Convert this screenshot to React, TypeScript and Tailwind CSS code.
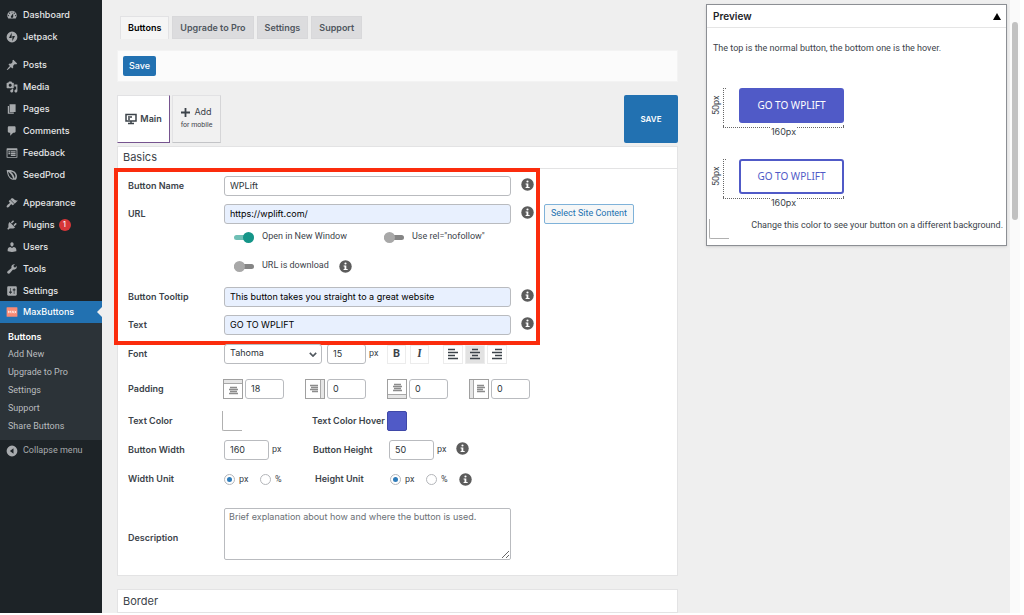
import { useState } from "react";
import type { ReactNode } from "react";
import clsx from "clsx";

/* Admin menu glyphs, drawn on a 20x20 grid */
const glyphs = {
  dashboard:
    "M3.76 16h12.48A7.998 7.998 0 0 0 10 3a7.998 7.998 0 0 0-6.24 13zM10 4c.55 0 1 .45 1 1s-.45 1-1 1-1-.45-1-1 .45-1 1-1zM6 6c.55 0 1 .45 1 1s-.45 1-1 1-1-.45-1-1 .45-1 1-1zm8 0c.55 0 1 .45 1 1s-.45 1-1 1-1-.45-1-1 .45-1 1-1zm-5.37 5.55L12 7v6c0 1.1-.9 2-2 2s-2-.9-2-2c0-.57.24-1.08.63-1.45zM4 10c.55 0 1 .45 1 1s-.45 1-1 1-1-.45-1-1 .45-1 1-1zm12 0c.55 0 1 .45 1 1s-.45 1-1 1-1-.45-1-1 .45-1 1-1z",
  jetpack:
    "M10 1a9 9 0 1 0 0 18 9 9 0 0 0 0-18zM9.4 11.6H5l4.4-8.5zM10.6 16.9V8.4H15z",
  posts:
    "M10.44 3.02l1.82-1.82 6.36 6.35-1.83 1.82c-1.05-.68-2.48-.57-3.41.36l-.75.75c-.92.93-1.04 2.35-.35 3.41l-1.83 1.82-2.41-2.41-2.8 2.79c-.42.42-3.38 2.71-3.8 2.29s1.86-3.39 2.28-3.81l2.79-2.79L4.1 9.36l1.83-1.82c1.05.69 2.48.57 3.4-.36l.75-.75c.93-.92 1.05-2.35.36-3.41z",
  media:
    "M13 11V4c0-.55-.45-1-1-1h-1.67L9 1H5L3.67 3H2c-.55 0-1 .45-1 1v7c0 .55.45 1 1 1h10c.55 0 1-.45 1-1zM7 4.5c1.38 0 2.5 1.12 2.5 2.5S8.38 9.5 7 9.5 4.5 8.38 4.5 7 5.62 4.5 7 4.5zM14 6h5v10.5c0 1.38-1.12 2.5-2.5 2.5S14 17.88 14 16.5s1.12-2.5 2.5-2.5c.17 0 .34.02.5.05V9h-3V6zm-4 8.05V13h2v3.5c0 1.38-1.12 2.5-2.5 2.5S7 17.88 7 16.5 8.12 14 9.5 14c.17 0 .34.02.5.05z",
  pages: "M6 15V2h10v13H6zm-1 1h8v2H3V5h2v11z",
  comments:
    "M5 2h9c1.1 0 2 .9 2 2v7c0 1.1-.9 2-2 2h-2l-5 5v-5H5c-1.1 0-2-.9-2-2V4c0-1.1.9-2 2-2z",
  feedback:
    "M2 2h16c.55 0 1 .45 1 1v14c0 .55-.45 1-1 1H2c-.55 0-1-.45-1-1V3c0-.55.45-1 1-1zm15.5 14.5v-11h-15v11zM4 7v2h3V7zm4 0v2h8V7zM4 10v2h3v-2zm4 0v2h8v-2zm0 3v2h8v-2z",
  seedprod:
    "M1 2c8-1 15 1 17 8 .8 3 0 6-1.500 8-5 .5-9.500-.5-12-5C2.500 10 2 6 1 2zm2.500 2c.5 3.500 1.200 6.500 3 9 1.500 2 3.500 3 5.500 3.300C11 12 8 7.500 3.500 4zm4 .3c4 3 6.500 7 7 11.700 1-1.500 1.500-3.500 1-5.500C14.500 6.500 11 5 7.500 4.300z",
  appearance:
    "M14.48 11.06L7.41 3.99l1.5-1.5c.5-.56 2.3-.47 3.51.32 1.21.8 1.43 1.28 2.91 2.1 1.18.64 2.45 1.26 4.45.85zm-.71.71L6.7 4.7 4.93 6.47c-.39.39-.39 1.02 0 1.41l1.06 1.06c.39.39.39 1.03 0 1.42-.6.6-1.43 1.11-2.21 1.69-.35.26-.7.53-1.01.84C1.43 14.23.4 16.08 1.4 17.07c.99 1 2.84-.03 4.18-1.36.31-.31.58-.66.85-1.02.57-.78 1.08-1.61 1.69-2.21.39-.39 1.02-.39 1.41 0l1.06 1.06c.39.39 1.02.39 1.41 0z",
  plugins:
    "M13.11 4.36L9.87 7.6 8 5.73l3.24-3.24c.35-.34 1.05-.2 1.56.32.52.51.66 1.21.31 1.55zm-8 1.77l.91-1.12 9.01 9.01-1.19.84c-.71.71-2.63 1.16-3.82 1.16H6.14L4.9 17.26c-.59.59-1.54.59-2.12 0-.59-.58-.59-1.53 0-2.12l1.24-1.24v-3.88c0-1.13.4-3.19 1.09-3.89zm7.26 3.97l3.24-3.24c.34-.35 1.04-.21 1.55.31.52.51.66 1.21.31 1.55l-3.24 3.25z",
  users:
    "M10 9.25c-2.27 0-2.73-3.44-2.73-3.44C7 4.02 7.82 2 9.97 2c2.16 0 2.98 2.02 2.71 3.81 0 0-.41 3.44-2.68 3.44zm0 2.57L12.72 10c2.39 0 4.52 2.33 4.52 4.53v2.49s-3.65 1.13-7.24 1.13c-3.65 0-7.24-1.13-7.24-1.13v-2.49c0-2.25 1.94-4.48 4.47-4.48z",
  tools:
    "M16.68 9.77c-1.34 1.34-3.3 1.67-4.95.99l-5.41 6.52c-.99.99-2.59.99-3.58 0s-.99-2.59 0-3.57l6.52-5.42c-.68-1.65-.35-3.61.99-4.95 1.28-1.28 3.12-1.62 4.72-1.06l-2.89 2.89 2.82 2.82 2.86-2.87c.53 1.58.18 3.39-1.08 4.65z",
  settings:
    "M18 16V4c0-1.1-.9-2-2-2H4c-1.1 0-2 .9-2 2v12c0 1.1.9 2 2 2h12c1.1 0 2-.9 2-2zM8 11h1c.55 0 1 .45 1 1s-.45 1-1 1H8v1.5c0 .28-.22.5-.5.5s-.5-.22-.5-.5V13H6c-.55 0-1-.45-1-1s.45-1 1-1h1V5.5c0-.28.22-.5.5-.5s.5.22.5.5V11zm5-2h-1c-.55 0-1-.45-1-1s.45-1 1-1h1V5.5c0-.28.22-.5.5-.5s.5.22.5.5V7h1c.55 0 1 .45 1 1s-.45 1-1 1h-1v5.5c0 .28-.22.5-.5.5s-.5-.22-.5-.5V9z",
  collapse: "M10 1a9 9 0 1 0 0 18 9 9 0 0 0 0-18zM12.500 5.500v9L6.500 10z",
};

type GlyphName = keyof typeof glyphs;

const menuGroups: { label: string; icon: GlyphName; badge?: number }[][] = [
  [
    { label: "Dashboard", icon: "dashboard" },
    { label: "Jetpack", icon: "jetpack" },
  ],
  [
    { label: "Posts", icon: "posts" },
    { label: "Media", icon: "media" },
    { label: "Pages", icon: "pages" },
    { label: "Comments", icon: "comments" },
    { label: "Feedback", icon: "feedback" },
    { label: "SeedProd", icon: "seedprod" },
  ],
  [
    { label: "Appearance", icon: "appearance" },
    { label: "Plugins", icon: "plugins", badge: 1 },
    { label: "Users", icon: "users" },
    { label: "Tools", icon: "tools" },
    { label: "Settings", icon: "settings" },
  ],
];

const subMenu = ["Buttons", "Add New", "Upgrade to Pro", "Settings", "Support", "Share Buttons"];
const tabs = ["Buttons", "Upgrade to Pro", "Settings", "Support"];

const bodyFont = "font-['Roboto',sans-serif]";
const headFont = "font-['Inter',sans-serif]";

const inputBase =
  "h-5 rounded-[3px] border border-[#b9bbbf] px-[5px] pb-[2px] font-['Inter',sans-serif] text-[9px] text-[#2c3338] outline-none";

function Glyph({ name }: { name: GlyphName }) {
  return (
    <svg viewBox="0 0 20 20" className="size-3 shrink-0 fill-[#a7aaad]" fillRule="evenodd" aria-hidden="true">
      <path d={glyphs[name]} />
    </svg>
  );
}

function Sidebar() {
  return (
    <nav className="w-[102px] shrink-0 bg-[#1d2327] pt-1 text-[9px] font-medium text-[#e6e7e8]">
      <div className="flex flex-col gap-[6px]">
        {menuGroups.map((group) => (
          <ul key={group[0].label}>
            {group.map((item) => (
              <li key={item.label}>
                <a href="#" className="flex h-[22px] items-center gap-[5px] pl-[6px]">
                  <Glyph name={item.icon} />
                  {item.label}
                  {item.badge && (
                    <span className="-ml-px flex size-3 items-center justify-center rounded-full bg-[#d63638] text-[7px] text-white">
                      {item.badge}
                    </span>
                  )}
                </a>
              </li>
            ))}
          </ul>
        ))}
      </div>
      <a href="#" className="relative -mt-px flex h-[22px] items-center gap-[5px] bg-[#2271b1] pl-[6px] text-white">
        <svg viewBox="0 0 20 20" className="size-3 shrink-0" aria-hidden="true">
          <rect x="1" y="2" width="18" height="16" rx="1" fill="#f98a74" />
          <path d="M4 12V8l2 2.500L8 8v4M10 12l1.500-4 1.500 4M14.500 8l2.500 4M17 8l-2.500 4" stroke="#fff" strokeWidth="1.200" fill="none" />
        </svg>
        MaxButtons
        <span className="absolute top-[6px] right-0 border-y-[5px] border-r-[5px] border-y-transparent border-r-[#efefef]" />
      </a>
      <ul className="bg-[#2c3338] pt-[5px] pb-1 pl-2">
        {subMenu.map((label, i) => (
          <li key={label}>
            <a
              href="#"
              className={clsx(
                "flex h-[18px] items-center",
                i === 0 ? "font-semibold text-white" : [bodyFont, "font-normal text-[#b9bcbf]"]
              )}
            >
              {label}
            </a>
          </li>
        ))}
      </ul>
      <button className={clsx(bodyFont, "flex h-[22px] items-center gap-[5px] pl-[6px] font-normal text-[#a7aaad]")}>
        <Glyph name="collapse" />
        Collapse menu
      </button>
    </nav>
  );
}

function Info() {
  return (
    <svg viewBox="0 0 24 24" className="size-[13px] shrink-0" role="img" aria-label="Info">
      <circle cx="12" cy="12" r="11.500" fill="#5c5c5c" />
      <circle cx="12" cy="6.500" r="2" fill="#fff" />
      <path d="M8.500 10h5v6.500H16v2H8.500v-2h1.700V12H8.500z" fill="#fff" />
    </svg>
  );
}

function Row({ label, htmlFor, className, children }: { label?: string; htmlFor?: string; className?: string; children: ReactNode }) {
  return (
    <div className={clsx("flex min-h-5 items-center", className)}>
      <label htmlFor={htmlFor} className={clsx(headFont, "w-24 shrink-0 font-semibold")}>
        {label}
      </label>
      {children}
    </div>
  );
}

function Toggle({ label, on = false, className }: { label: string; on?: boolean; className?: string }) {
  return (
    <label className={clsx("flex items-center gap-2", className)}>
      <input type="checkbox" defaultChecked={on} className="peer sr-only" />
      <span className="flex h-[5px] w-5 items-center rounded-full bg-[#858585] before:size-[11px] before:rounded-full before:bg-[#a8a8a8] peer-checked:justify-end peer-checked:bg-[#6fbfb5] peer-checked:before:bg-[#159588]" />
      {label}
    </label>
  );
}

function TextField({ id, label, value, filled = false, className, children }: { id: string; label: string; value: string; filled?: boolean; className?: string; children?: ReactNode }) {
  return (
    <Row label={label} htmlFor={id} className={className}>
      <input
        id={id}
        type="text"
        defaultValue={value}
        className={clsx(inputBase, "w-[287px]", filled ? "bg-[#e8f0fe] text-black" : "bg-white")}
      />
      <span className="mb-1 ml-[10px] flex">
        <Info />
      </span>
      {children}
    </Row>
  );
}

function AlignLines({ align }: { align: "left" | "center" | "right" }) {
  const d = {
    left: "M0 1.500h7M0 4.500h10M0 7.500h7M0 10.500h10",
    center: "M2 1.500h6M0 4.500h10M2 7.500h6M0 10.500h10",
    right: "M3 1.500h7M0 4.500h10M3 7.500h7M0 10.500h10",
  }[align];
  return (
    <svg viewBox="0 0 10 12" className="h-3 w-[10px] fill-none stroke-current" aria-hidden="true">
      <path d={d} strokeWidth="1.500" />
    </svg>
  );
}

const paddings = [
  { side: "top", value: "18", bar: "M1 1h18v3H1z", rule: "M1 4.500h18", lines: "M7 8.500h7M6 10.500h9M7 12.500h7M6 14.500h9" },
  { side: "right", value: "0", bar: "M16 1h3v18h-3z", rule: "M15.500 1v18", lines: "M5 6.500h8M6 8.500h7M5 10.500h8M7 12.500h6" },
  { side: "bottom", value: "0", bar: "M1 16h18v3H1z", rule: "M1 15.500h18", lines: "M7 5.500h7M6 7.500h9M7 9.500h7M6 11.500h9" },
  { side: "left", value: "0", bar: "M1 1h3v18H1z", rule: "M4.500 1v18", lines: "M8 6.500h7M8 8.500h8M8 10.500h6M8 12.500h8" },
];

function UnitRadios({ name }: { name: string }) {
  return (
    <>
      {["px", "%"].map((unit) => (
        <label key={unit} className="flex w-9 items-center gap-1">
          <input
            type="radio"
            name={name}
            defaultChecked={unit === "px"}
            className="grid size-[11px] appearance-none place-content-center rounded-full border border-[#b4b6ba] bg-white before:size-[5px] before:rounded-full checked:before:bg-[#2f7cba]"
          />
          <span className="pt-[2px]">{unit}</span>
        </label>
      ))}
    </>
  );
}

const toolButton = "flex h-[19px] items-center justify-center border border-[#ececec] text-[11px]";

function BasicsForm() {
  const [align, setAlign] = useState("center");

  return (
    <form className={clsx(bodyFont, "border border-t-0 border-[#e3e3e4] bg-white pb-[15px] text-[9px] text-[#3c434a]")}>
      {/* Highlighted fields */}
      <div className="relative pt-[7px] pl-[10px]">
        <div className="pointer-events-none absolute -top-px -bottom-[10px] -left-1 w-[426px] border-4 border-[#fb2c0d]" />
        <TextField id="name" label="Button Name" value="WPLift" />
        <TextField id="url" label="URL" value="https://wplift.com/" filled className="mt-2">
          <button
            type="button"
            className="ml-[10px] h-5 rounded-xs border border-[#7fb2d9] bg-[#f6f7f7] px-[6px] whitespace-nowrap text-[#2271b1]"
          >
            Select Site Content
          </button>
        </TextField>
        <Row className="mt-[3px]">
          <Toggle label="Open in New Window" on className="ml-[10px] w-[150px]" />
          <Toggle label={'Use rel="nofollow"'} />
        </Row>
        <Row className="mt-[9px]">
          <Toggle label="URL is download" className="ml-[10px]" />
          <span className="ml-[10px]">
            <Info />
          </span>
        </Row>
        <TextField id="tooltip" label="Button Tooltip" value="This button takes you straight to a great website" filled className="mt-[11px]" />
        <TextField id="text" label="Text" value="GO TO WPLIFT" filled className="mt-2" />
      </div>

      <div className="pl-[10px]">
        <Row label="Font" htmlFor="font" className="mt-[9px]">
          <span className="relative">
            <select id="font" className={clsx(inputBase, "w-[98px] appearance-none bg-white")}>
              <option>Tahoma</option>
            </select>
            <svg viewBox="0 0 10 6" className="pointer-events-none absolute top-2 right-[5px] h-[5px] w-2 fill-none stroke-[#50575e] stroke-2" aria-hidden="true">
              <path d="M1 1l4 4 4-4" />
            </svg>
          </span>
          <input type="text" aria-label="Font size" defaultValue="15" className={clsx(inputBase, "ml-[5px] w-[39px]")} />
          <span className="ml-[3px] w-[18px]">px</span>
          <button type="button" className={clsx(toolButton, "w-[19px] font-bold")}>
            B
          </button>
          <button type="button" className={clsx(toolButton, "ml-1 w-[19px] font-serif font-bold italic")}>
            I
          </button>
          <div className="ml-[14px] flex gap-[2px]">
            {(["left", "center", "right"] as const).map((side) => (
              <button
                key={side}
                type="button"
                aria-label={`Align ${side}`}
                onClick={() => setAlign(side)}
                className={clsx(toolButton, "w-5", align === side && "border-[#c4c4c4] bg-[#e2e2e2]")}
              >
                <AlignLines align={side} />
              </button>
            ))}
          </div>
        </Row>

        <Row label="Padding" htmlFor="padding-top" className="mt-[15px]">
          <div className="-ml-px flex gap-[21px]">
            {paddings.map((p) => (
              <div key={p.side} className="flex gap-[2px]">
                <svg viewBox="0 0 20 20" className="size-5 fill-none" aria-hidden="true">
                  <path d={p.bar} fill="#e6e6e6" />
                  <path d={p.rule} stroke="#a8a8a8" />
                  <rect x="0.500" y="0.500" width="19" height="19" stroke="#a0a0a0" />
                  <path d={p.lines} stroke="#8c8c8c" strokeWidth="1.300" />
                </svg>
                <input
                  id={`padding-${p.side}`}
                  type="text"
                  aria-label={`Padding ${p.side}`}
                  defaultValue={p.value}
                  className={clsx(inputBase, "w-[39px]")}
                />
              </div>
            ))}
          </div>
        </Row>

        <Row label="Text Color" className="mt-3">
          <button type="button" aria-label="Text color" className="-ml-[2px] size-5 rounded-bl-xs border-b border-l border-[#b0b0b0] bg-white" />
          <span className={clsx(headFont, "ml-[70px] w-[75px] font-semibold whitespace-nowrap")}>Text Color Hover</span>
          <button type="button" aria-label="Text color hover" className="size-5 rounded-xs border border-[#3f48a8] bg-[#505ac7]" />
        </Row>

        <Row label="Button Width" htmlFor="width" className="mt-[9px]">
          <input id="width" type="text" defaultValue="160" className={clsx(inputBase, "w-[45px]")} />
          <span className="ml-[3px] w-[41px]">px</span>
          <label htmlFor="height" className={clsx(headFont, "w-[76px] font-semibold")}>
            Button Height
          </label>
          <input id="height" type="text" defaultValue="50" className={clsx(inputBase, "w-[45px]")} />
          <span className="mr-[10px] ml-[3px]">px</span>
          <span className="mb-1">
            <Info />
          </span>
        </Row>

        <Row label="Width Unit" className="mt-[9px]">
          <UnitRadios name="width-unit" />
          <span className={clsx(headFont, "ml-[19px] w-[75px] font-semibold")}>Height Unit</span>
          <UnitRadios name="height-unit" />
          <span className="-ml-[3px]">
            <Info />
          </span>
        </Row>

        <Row label="Description" htmlFor="description" className="mt-[19px] [&>label]:pt-2">
          <textarea
            id="description"
            placeholder="Brief explanation about how and where the button is used."
            className={clsx(headFont, "h-[52px] w-[287px] rounded-xs border border-[#b9bbbf] px-1 py-px text-[9px] placeholder:text-[#6b7075]")}
          />
        </Row>
      </div>
    </form>
  );
}

function Specimen({ hover = false }: { hover?: boolean }) {
  return (
    <div className="flex pl-1">
      <span className="flex h-[34px] w-3 rotate-180 items-center justify-center [writing-mode:vertical-rl]">50px</span>
      <div className="w-[121px]">
        <div className="flex justify-between">
          <div className="h-[35px] w-[3px] border-t border-l border-dotted border-[#666]" />
          <button
            className={clsx(
              "h-[35px] w-[105px] rounded-[3px] border-2 border-[#505ac7] font-['Noto_Sans',sans-serif] text-[10px]",
              hover ? "bg-white text-[#505ac7]" : "bg-[#505ac7] text-white"
            )}
          >
            GO TO WPLIFT
          </button>
        </div>
        <div className="mt-[2px] h-[3px] border-x border-b border-x-[#666] border-b-[#666] [border-bottom-style:dotted]" />
        <div className="-mt-px text-center leading-[10px]">
          <span className={clsx(headFont, "bg-white")}>160px</span>
        </div>
      </div>
    </div>
  );
}

function Preview() {
  return (
    <aside className={clsx(bodyFont, "mt-1 w-[301px] shrink-0 self-start border border-[#8c8f94] bg-white pb-[6px] text-[9px] text-[#3c434a] shadow")}>
      <header className="flex h-[23px] items-center justify-between border-b border-[#e5e5e5] pr-[5px] pl-[6px]">
        <h2 className={clsx(headFont, "text-[10px] font-semibold text-[#1d2327]")}>Preview</h2>
        <button aria-label="Collapse preview" className="border-x-4 border-b-[7px] border-x-transparent border-b-black" />
      </header>
      <p className="mt-[14px] pl-[6px] leading-3">The top is the normal button, the bottom one is the hover.</p>
      <div className="mt-[34px] flex flex-col gap-[22px]">
        <Specimen />
        <Specimen hover />
      </div>
      <div className="mt-[11px] flex items-start justify-between pr-[3px] pl-[2px]">
        <button aria-label="Preview background" className="size-5 rounded-bl-xs border-b border-l border-[#b0b0b0] bg-white" />
        <span>Change this color to see your button on a different background.</span>
      </div>
    </aside>
  );
}

function Editor() {
  return (
    <div className="min-w-0 flex-1 pt-4">
      <div className="flex gap-[3px] pl-[3px] text-[9px] font-semibold">
        {tabs.map((tab, i) => (
          <a
            key={tab}
            href="#"
            className={clsx(
              "flex h-[23px] items-center px-[7px] whitespace-nowrap",
              i === 0
                ? "border border-b-0 border-[#e2e2e4] bg-[#f5f5f5] text-black"
                : "border border-[#d8d8da] bg-[#dcdcde] text-[#50575e]"
            )}
          >
            {tab}
          </a>
        ))}
      </div>

      <div className="mt-[11px] flex h-8 items-center border border-[#f3f3f3] bg-[#fbfbfb] px-[5px]">
        <button className="h-5 rounded-xs bg-[#2271b1] px-[6px] text-[9px] font-medium text-white">Save</button>
      </div>

      <div className="mt-[13px] flex gap-[2px] text-[10px] text-[#3c434a]">
        <button className="flex h-12 w-[53px] items-center justify-center gap-[3px] border border-t-[#e2e2e4] border-r-[#76548f] border-b-[#76548f] border-l-[#e2e2e4] bg-white text-[9px] font-semibold">
          <svg viewBox="0 0 24 24" className="size-3 fill-none stroke-current stroke-[3]" aria-hidden="true">
            <path d="M2 3h20v13H2zM12 16v5M6 21h12M6 8h8M6 12h4" />
          </svg>
          Main
        </button>
        <button className="flex h-12 w-[49px] flex-col items-center justify-center border border-t-[#e2e2e4] border-r-[#d5d5d7] border-b-[#c3c4c7] border-l-[#e2e2e4] bg-[#f1f1f1]">
          <span className="flex items-center gap-1 text-[9px] leading-3">
            <svg viewBox="0 0 10 10" className="size-[9px] stroke-current stroke-2" aria-hidden="true">
              <path d="M5 0v10M0 5h10" />
            </svg>
            Add
          </span>
          <span className={clsx(bodyFont, "text-[7px] leading-[14px]")}>for mobile</span>
        </button>
        <button className="ml-auto h-12 w-[54px] rounded-xs bg-[#2271b1] text-[8px] font-semibold text-white">SAVE</button>
      </div>

      <h2 className="mt-[3px] flex h-[23px] items-center border border-[#e3e3e4] bg-white pl-[5px] text-[11px] text-[#3c434a]">Basics</h2>
      <BasicsForm />
      <h2 className="mt-[13px] flex h-6 items-center border border-[#e3e3e4] bg-white pl-[5px] text-[11px] text-[#3c434a]">Border</h2>
    </div>
  );
}

export default function App() {
  return (
    <div className="flex h-screen overflow-hidden bg-white pr-1 pb-[2px] font-['Inter',sans-serif]">
      <Sidebar />
      <main className="flex flex-1 gap-7 bg-[#efefef] pr-[3px] pl-[15px]">
        <Editor />
        <Preview />
      </main>
      {/* Scroll track */}
      <div className="w-[10px] shrink-0 bg-[#fafafa] px-[2px] pt-[22px]">
        <div className="h-[198px] rounded-full bg-[#c1c1c1]" />
      </div>
    </div>
  );
}
